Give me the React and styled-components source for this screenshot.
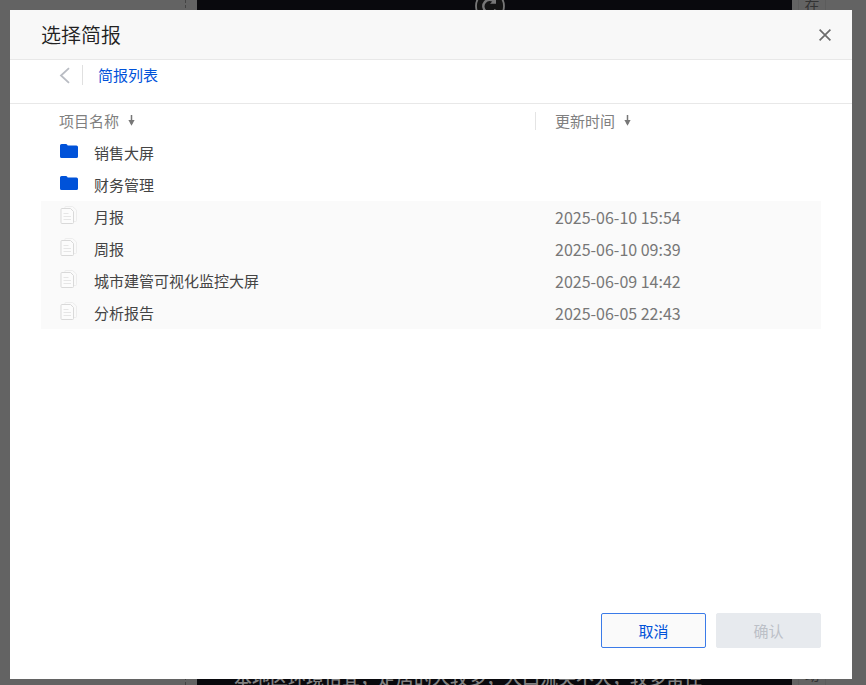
import React, { useState } from "react";
import styled, { createGlobalStyle } from "styled-components";

const FOLDERS = [
  { id: 1, name: "销售大屏" },
  { id: 2, name: "财务管理" },
];

const REPORTS = [
  { id: 3, name: "月报", updated: "2025-06-10 15:54" },
  { id: 4, name: "周报", updated: "2025-06-10 09:39" },
  { id: 5, name: "城市建管可视化监控大屏", updated: "2025-06-09 14:42" },
  { id: 6, name: "分析报告", updated: "2025-06-05 22:43" },
];

const FolderIcon = () => (
  <svg width="19" height="20" viewBox="0 0 19 20" aria-hidden="true">
    <path
      d="M2.6 3H7Q7.8 3 8.2 3.7L8.7 4.5H17.4Q19 4.5 19 6V15.4Q19 17 17.4 17H2.6Q1 17 1 15.4V4.6Q1 3 2.6 3Z"
      fill="#0052d9"
    />
  </svg>
);

const FileIcon = () => (
  <svg width="19" height="20" viewBox="0 0 19 20" fill="none" aria-hidden="true">
    <path
      d="M6 3V2Q6 1.5 6.5 1.5H13.5L17.5 5V15.5Q17.5 16.5 16.5 16.5H15"
      stroke="#ededed"
    />
    <path
      d="M3 3.5H11.5L14.5 6.5V17.5Q14.5 18.5 13.5 18.5H3Q2 18.5 2 17.5V4.5Q2 3.5 3 3.5Z"
      fill="#fcfcfc"
      stroke="#d9d9d9"
    />
    <path d="M4.5 8.5H9.5M4.5 11.5H12M4.5 14.5H12" stroke="#e6e6e6" />
  </svg>
);

const SortIcon = () => (
  <svg width="7" height="11" viewBox="0 0 7 11" aria-hidden="true">
    <path d="M3.5 0V9" stroke="#777" strokeWidth="1.5" />
    <path d="M.4 5H6.6L3.5 10.8Z" fill="#777" />
  </svg>
);

const BackIcon = () => (
  <svg width="12" height="17" viewBox="0 0 12 17" fill="none" aria-hidden="true">
    <path d="M10 1.2L2 8.5L10 15.8" stroke="#b9bcc3" strokeWidth="1.8" />
  </svg>
);

const CloseIcon = () => (
  <svg width="12" height="12" viewBox="0 0 12 12" aria-hidden="true">
    <path d="M.6 .6L11.4 11.4M11.4 .6L.6 11.4" stroke="#6b6b6b" strokeWidth="1.7" />
  </svg>
);

const RefreshIcon = () => (
  <svg width="32" height="32" viewBox="0 0 32 32" fill="none" aria-hidden="true">
    <circle cx="16" cy="16" r="14" fill="#141414" stroke="#777" strokeWidth="1.8" />
    <path d="M21.5 19.5A6.5 6.5 0 1 1 20.5 11.8" stroke="#777" strokeWidth="2.4" />
    <path d="M22 7.8V13.8H16Z" fill="#777" />
  </svg>
);

const App = () => {
  const [open, setOpen] = useState(true);

  return (
    <>
      <GlobalStyle />
      <Workspace>
        <SidePanel />
        <Canvas>
          <RefreshIcon />
          <CanvasText>
            本地区环境怡宜，定居的人较多，人口流失不大，较多常住
          </CanvasText>
        </Canvas>
        <ToolPanel>
          <ToolTab>在</ToolTab>
          <ToolTab>动</ToolTab>
        </ToolPanel>
      </Workspace>
      {open && (
        <Overlay>
          <Modal role="dialog" aria-labelledby="dialog-title">
            <ModalHeader>
              <ModalTitle id="dialog-title">选择简报</ModalTitle>
              <IconButton aria-label="关闭" onClick={() => setOpen(false)}>
                <CloseIcon />
              </IconButton>
            </ModalHeader>
            <Breadcrumb>
              <BackButton aria-label="返回">
                <BackIcon />
              </BackButton>
              <CrumbLink href="#list">简报列表</CrumbLink>
            </Breadcrumb>
            <TableArea>
              <Table>
                <thead>
                  <tr>
                    <HeadCell>
                      <SortButton>
                        项目名称
                        <SortIcon />
                      </SortButton>
                    </HeadCell>
                    <HeadCell $date>
                      <SortButton $divided>
                        更新时间
                        <SortIcon />
                      </SortButton>
                    </HeadCell>
                  </tr>
                </thead>
                <tbody>
                  {FOLDERS.map((folder) => (
                    <Row key={folder.id}>
                      <NameCell>
                        <NameBox>
                          <FolderIcon />
                          {folder.name}
                        </NameBox>
                      </NameCell>
                      <DateCell />
                    </Row>
                  ))}
                  {REPORTS.map((report) => (
                    <Row key={report.id} $shaded>
                      <NameCell>
                        <NameBox>
                          <FileIcon />
                          {report.name}
                        </NameBox>
                      </NameCell>
                      <DateCell>{report.updated}</DateCell>
                    </Row>
                  ))}
                </tbody>
              </Table>
            </TableArea>
            <ModalFooter>
              <Button onClick={() => setOpen(false)}>取消</Button>
              <Button disabled>确认</Button>
            </ModalFooter>
          </Modal>
        </Overlay>
      )}
    </>
  );
};

export default App;

const GlobalStyle = createGlobalStyle`
  * {
    box-sizing: border-box;
  }
  body {
    margin: 0;
    background: #636363;
    font-family: "Noto Sans CJK SC", sans-serif;
    font-size: 15px;
    color: #444;
  }
  button {
    padding: 0;
    border: none;
    background: none;
    font: inherit;
    color: inherit;
    cursor: pointer;
  }
`;

const Workspace = styled.div`
  display: flex;
  height: 100vh;
  overflow: hidden;
`;

const SidePanel = styled.div`
  width: 186px;
  margin-right: 11px;
  border-right: 1px dashed #444;
`;

const Canvas = styled.div`
  flex: 1;
  display: flex;
  flex-direction: column;
  justify-content: space-between;
  align-items: center;
  margin: -10px 0 -4px;
  padding-right: 10px;
  background: #09090d;
`;

const CanvasText = styled.p`
  align-self: flex-start;
  margin: 0 0 0 37px;
  font-size: 18px;
  font-weight: 500;
  line-height: 24px;
  white-space: nowrap;
  color: #808080;
`;

const ToolPanel = styled.div`
  display: flex;
  flex-direction: column;
  justify-content: space-between;
  width: 74px;
  margin: -8px 0 -2px;
  padding-left: 6px;
`;

const ToolTab = styled.div`
  width: 28px;
  border: 1px solid #5c5c5c;
  font-size: 15px;
  line-height: 24px;
  text-align: center;
  color: #333;
`;

const Overlay = styled.div`
  position: fixed;
  inset: 0;
  display: flex;
  padding: 10px 14px 6px 10px;
`;

const Modal = styled.div`
  flex: 1;
  display: flex;
  flex-direction: column;
  background: #fff;
`;

const ModalHeader = styled.div`
  display: flex;
  align-items: center;
  justify-content: space-between;
  height: 50px;
  padding: 0 18px 0 31px;
  border-bottom: 1px solid #e8e8e8;
  background: #f8f8f8;
`;

const ModalTitle = styled.h1`
  margin: 0;
  font-size: 20px;
  font-weight: 350;
  line-height: 24px;
  color: #222;
`;

const IconButton = styled.button`
  display: flex;
  align-items: center;
  justify-content: center;
  width: 18px;
  height: 18px;
`;

const Breadcrumb = styled.nav`
  display: flex;
  align-items: flex-start;
  height: 44px;
  padding: 5px 49px;
  border-bottom: 1px solid #e8e8e8;
`;

const BackButton = styled.button`
  display: flex;
  align-items: center;
  width: 24px;
  height: 20px;
  border-right: 1px solid #e0e0e0;
`;

const CrumbLink = styled.a`
  margin-left: 15px;
  line-height: 20px;
  color: #0052d9;
  text-decoration: none;
`;

const TableArea = styled.div`
  flex: 1;
  padding: 0 31px;
`;

const Table = styled.table`
  width: 100%;
  table-layout: fixed;
  border-collapse: collapse;
`;

const HeadCell = styled.th`
  width: ${({ $date }) => ($date ? "286px" : "auto")};
  height: 33px;
  padding: ${({ $date }) => ($date ? "0" : "0 18px")};
  font-weight: 400;
  text-align: left;
  color: #808080;
`;

const SortButton = styled.button`
  display: flex;
  align-items: center;
  gap: 9px;
  height: 18px;
  line-height: 16px;
  padding-left: ${({ $divided }) => ($divided ? "19px" : "0")};
  border-left: ${({ $divided }) => ($divided ? "1px solid #e4e4e4" : "none")};
`;

const Row = styled.tr`
  background: ${({ $shaded }) => ($shaded ? "#fafafa" : "#fff")};
`;

const NameCell = styled.td`
  height: 32px;
  padding: 0 18px;
`;

const NameBox = styled.div`
  display: flex;
  align-items: flex-start;
  gap: 16px;
  line-height: 24px;
`;

const DateCell = styled.td`
  padding: 0 20px;
  font-size: 16px;
  color: #777;
`;

const ModalFooter = styled.div`
  display: flex;
  justify-content: flex-end;
  gap: 10px;
  padding: 0 31px 31px;
`;

const Button = styled.button`
  width: 105px;
  height: 35px;
  border: 1px solid #3b7be8;
  border-radius: 2px;
  background: #fafafa;
  line-height: 32px;
  color: #0052d9;

  &:disabled {
    border-color: #e7eaee;
    background: #e7eaee;
    color: #bcc0c7;
    cursor: default;
  }
`;
